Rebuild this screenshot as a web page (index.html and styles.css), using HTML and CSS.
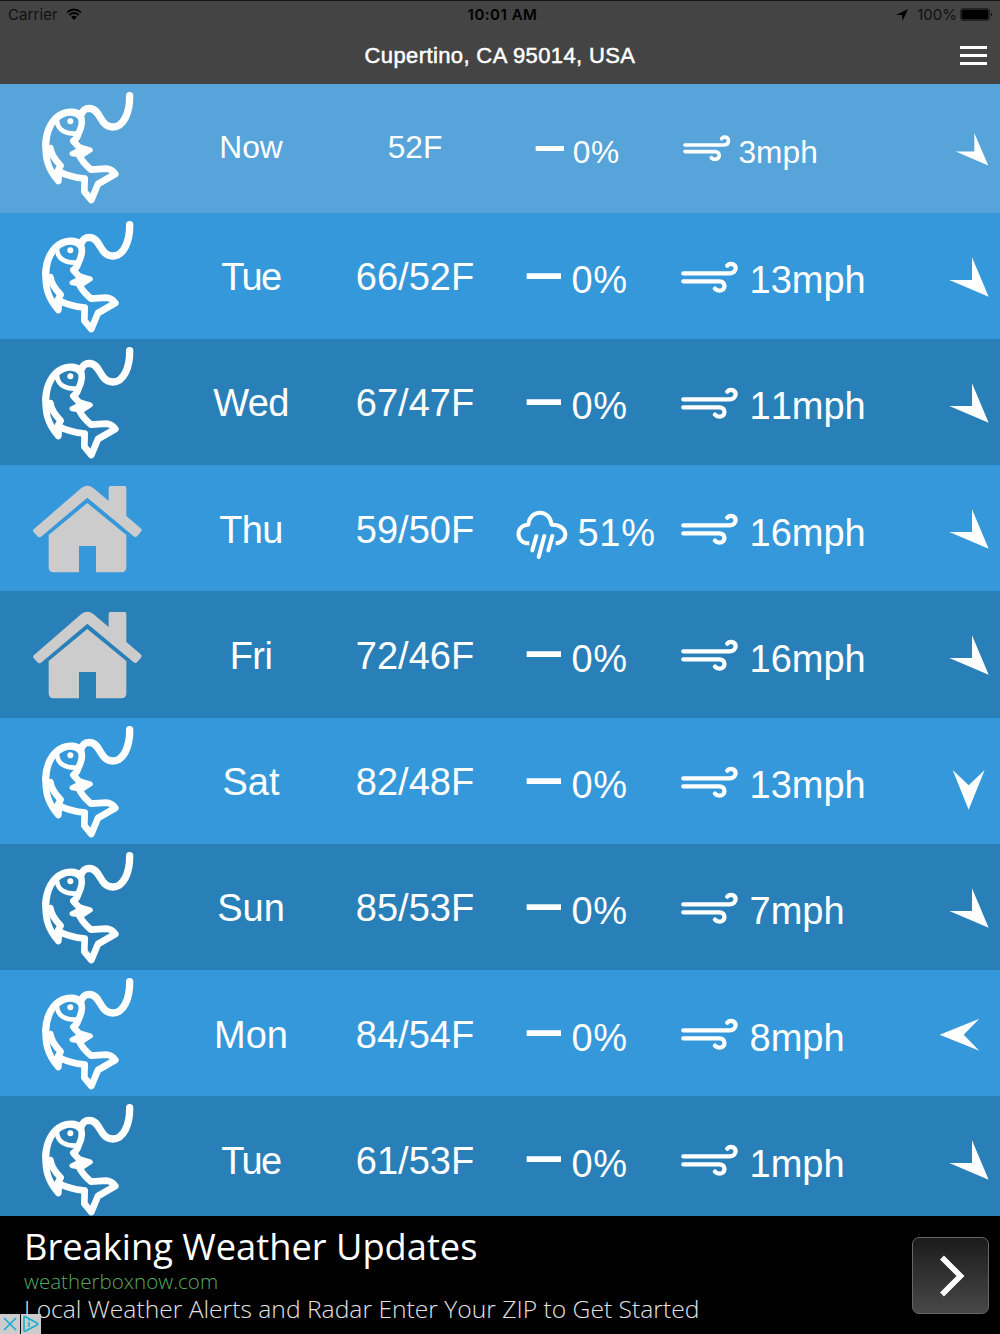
FILE: index.html
```
<!DOCTYPE html>
<html lang="en">
<head>
<meta charset="utf-8">
<title>Fishing Forecast</title>
<link rel="stylesheet" href="styles.css">
</head>
<body>
<svg class="defs" aria-hidden="true">
  <symbol id="fish" viewBox="0 0 420 378">
    <g fill="none" stroke="#fff" stroke-width="22" stroke-linecap="round" stroke-linejoin="round">
      <path d="M329 35C330 85 311 129 278 129C238 129 243 74 208 73C192 73 187 82 182 94"/>
      <path d="M181 97C170 82 146 82 129 89C97 103 79 138 77 182"/>
      <path d="M77 182C76 215 80 252 115 291L117 265" stroke-width="20"/>
      <path d="M91 192C94 214 106 229 122 245L111 265M117 262C139 275 164 280 194 284L193 323L214 348L234 300L286 270Q274 254 258 254L213 257Q189 237 179 217" stroke-width="20"/>
      <path d="M181 95C191 112 184 132 175 150Q172 163 160 171L175 188L194 197" stroke-width="20"/>
      <path d="M156 209L186 214L211 198L190 192Z" stroke-width="15"/>
      <path d="M186 190L211 198L184 212Z" stroke-width="8" fill="#fff"/>
      <path d="M111 110C113 138 136 152 177 148" stroke-width="14"/>
    </g>
    <circle cx="151" cy="112" r="9" fill="#fff"/>
  </symbol>
  <symbol id="house" viewBox="0 0 420 378">
    <path fill="#ccc" d="M43 191Q37 194 40 200L54 215Q59 219 65 214L202 98L341 214Q347 219 352 213L364 199Q367 194 362 190L319 153V68Q319 63 314 63H271Q266 63 266 68V108L220 69Q202 55 184 69ZM202 114L86 210V307Q86 322 101 322H177V243H228V322H304Q319 322 319 307V210Z"/>
  </symbol>
  <symbol id="dash" viewBox="0 0 207 378">
    <path fill="#fff" d="M71 181H174V198H71Z"/>
  </symbol>
  <symbol id="dash-now" viewBox="0 0 207 386">
    <path fill="#fff" d="M98 186H183V201H98Z"/>
  </symbol>
  <symbol id="rain" viewBox="0 0 225 378">
    <g fill="none" stroke="#fff" stroke-width="12" stroke-linecap="round">
      <path d="M79 235H73A28 28 0 0 1 76 179C80 132 140 130 146 179C198 178 199 232 158 235" stroke-linecap="butt" stroke-linejoin="round"/>
      <path d="M100 213L88 256M124 213L107 276M148 213L136 256"/>
    </g>
  </symbol>
  <symbol id="wind" viewBox="0 0 171 114">
    <g fill="none" stroke="#fff" stroke-width="13" stroke-linecap="round">
      <path d="M7 43H146C168 43 169 16 152 15Q144 14 139 20M7 67H115C136 67 135 95 115 95Q107 95 102 89"/>
    </g>
  </symbol>
  <symbol id="arrow-se" viewBox="0 0 240 378">
    <path fill="#fff" d="M156 133L206 251L88 201H156Z"/>
  </symbol>
  <symbol id="arrow-now" viewBox="0 0 240 386">
    <path fill="#fff" d="M163 147L205 245L107 203H163Z"/>
  </symbol>
  <symbol id="arrow-s" viewBox="0 0 240 378">
    <path fill="#fff" d="M98 156L146 202L194 156L146 275Z"/>
  </symbol>
  <symbol id="arrow-w" viewBox="0 0 240 378">
    <path fill="#fff" d="M59 194L178 146L131 194L178 242Z"/>
  </symbol>
</svg>

<header class="header">
  <div class="status">
    <div class="carrier">Carrier
      <svg width="16" height="12" viewBox="0 0 16 12"><path d="M1 4.4Q8-1.4 15 4.4M3.2 7Q8 3 12.8 7" fill="none" stroke="#000" stroke-width="1.8"/><path d="M5 8.9Q8 6.6 11 8.9L8 12Z"/></svg>
    </div>
    <div class="clock">10:01 AM</div>
    <div class="power">
      <svg class="locate" width="12" height="12" viewBox="0 0 12 12"><path d="M0 6L12 0L6.5 12L6 6Z"/></svg>
      <span>100%</span>
      <svg class="battery" width="33" height="13" viewBox="0 0 33 13"><rect x=".5" y=".5" width="29" height="12" rx="2.5" fill="none" stroke="#222"/><rect x="1.5" y="1.5" width="27" height="10" rx="1.5"/><path d="M31 4.5Q33 6.5 31 8.5Z"/></svg>
    </div>
  </div>
  <div class="titlebar">
    <h1 class="place">Cupertino, CA 95014, USA</h1>
    <div class="menu"><i></i><i></i><i></i></div>
  </div>
</header>

<main class="list">
  <section class="row now">
    <svg class="activity"><use href="#fish"/></svg>
    <div class="day">Now</div><div class="temp">52F</div>
    <div class="precip"><svg class="dash"><use href="#dash-now"/></svg><span>0%</span></div>
    <div class="wind"><svg class="gust"><use href="#wind"/></svg><span>3mph</span></div>
    <svg class="arrow"><use href="#arrow-now"/></svg>
  </section>
  <section class="row">
    <svg class="activity"><use href="#fish"/></svg>
    <div class="day tighter">Tue</div><div class="temp">66/52F</div>
    <div class="precip"><svg class="dash"><use href="#dash"/></svg><span>0%</span></div>
    <div class="wind"><svg class="gust"><use href="#wind"/></svg><span>13mph</span></div>
    <svg class="arrow"><use href="#arrow-se"/></svg>
  </section>
  <section class="row dark">
    <svg class="activity"><use href="#fish"/></svg>
    <div class="day tight">Wed</div><div class="temp">67/47F</div>
    <div class="precip"><svg class="dash"><use href="#dash"/></svg><span>0%</span></div>
    <div class="wind"><svg class="gust"><use href="#wind"/></svg><span>11mph</span></div>
    <svg class="arrow"><use href="#arrow-se"/></svg>
  </section>
  <section class="row">
    <svg class="activity"><use href="#house"/></svg>
    <div class="day tight">Thu</div><div class="temp">59/50F</div>
    <div class="precip"><svg class="rain"><use href="#rain"/></svg><span>51%</span></div>
    <div class="wind"><svg class="gust"><use href="#wind"/></svg><span>16mph</span></div>
    <svg class="arrow"><use href="#arrow-se"/></svg>
  </section>
  <section class="row dark">
    <svg class="activity"><use href="#house"/></svg>
    <div class="day tight">Fri</div><div class="temp">72/46F</div>
    <div class="precip"><svg class="dash"><use href="#dash"/></svg><span>0%</span></div>
    <div class="wind"><svg class="gust"><use href="#wind"/></svg><span>16mph</span></div>
    <svg class="arrow"><use href="#arrow-se"/></svg>
  </section>
  <section class="row">
    <svg class="activity"><use href="#fish"/></svg>
    <div class="day">Sat</div><div class="temp">82/48F</div>
    <div class="precip"><svg class="dash"><use href="#dash"/></svg><span>0%</span></div>
    <div class="wind"><svg class="gust"><use href="#wind"/></svg><span>13mph</span></div>
    <svg class="arrow"><use href="#arrow-s"/></svg>
  </section>
  <section class="row dark">
    <svg class="activity"><use href="#fish"/></svg>
    <div class="day">Sun</div><div class="temp">85/53F</div>
    <div class="precip"><svg class="dash"><use href="#dash"/></svg><span>0%</span></div>
    <div class="wind"><svg class="gust"><use href="#wind"/></svg><span>7mph</span></div>
    <svg class="arrow"><use href="#arrow-se"/></svg>
  </section>
  <section class="row">
    <svg class="activity"><use href="#fish"/></svg>
    <div class="day">Mon</div><div class="temp">84/54F</div>
    <div class="precip"><svg class="dash"><use href="#dash"/></svg><span>0%</span></div>
    <div class="wind"><svg class="gust"><use href="#wind"/></svg><span>8mph</span></div>
    <svg class="arrow"><use href="#arrow-w"/></svg>
  </section>
  <section class="row dark">
    <svg class="activity"><use href="#fish"/></svg>
    <div class="day tighter">Tue</div><div class="temp">61/53F</div>
    <div class="precip"><svg class="dash"><use href="#dash"/></svg><span>0%</span></div>
    <div class="wind"><svg class="gust"><use href="#wind"/></svg><span>1mph</span></div>
    <svg class="arrow"><use href="#arrow-se"/></svg>
  </section>
</main>

<aside class="ad">
  <div class="copy">
    <div class="headline">Breaking Weather Updates</div>
    <div class="site">weatherboxnow.com</div>
    <div class="blurb">Local Weather Alerts and Radar Enter Your ZIP to Get Started</div>
  </div>
  <div class="go"><svg width="26" height="42" viewBox="0 0 26 42"><path d="M3 2.5L21.5 21L3 39.5" fill="none" stroke="#fff" stroke-width="5.6"/></svg></div>
  <div class="badges">
    <svg width="20" height="20" viewBox="0 0 20 20"><path d="M4 4L16 16M16 4L4 16" stroke="#18aecf" stroke-width="1.6"/></svg>
    <svg width="20" height="20" viewBox="0 0 20 20"><path d="M3 3.2Q3 2 4.5 2.7L16 9Q17.5 10 16 11L4.5 17Q3 17.6 3 16.5ZM8 8V13M8 5.3V6.6" fill="none" stroke="#18aecf" stroke-width="1.6"/></svg>
  </div>
</aside>
</body>
</html>
```
FILE: styles.css
```
* { box-sizing: border-box; }
body {
  margin: 0;
  width: 1000px;
  height: 1334px;
  overflow: hidden;
  background: #000;
  color: #fff;
  font-family: "Liberation Sans", Arial, sans-serif;
}
svg { display: block; flex: none; }
.defs { width: 0; height: 0; position: absolute; }

.header { height: 84px; background: #444; border-top: 1px solid #161616; }
.status {
  display: grid;
  grid-template-columns: 1fr auto 1fr;
  height: 27px;
  padding: 0 7px 0 8px;
  line-height: 27px;
  color: #000;
  font-family: Inter, sans-serif;
  font-size: 15px;
}
.carrier { display: flex; align-items: center; gap: 8px; color: #111; letter-spacing: .1px; }
.carrier svg { margin-top: -2px; }
.clock { font-weight: 600; padding-left: 4px; letter-spacing: .5px; }
.power { display: flex; align-items: center; justify-content: flex-end; color: #111; }
.locate { margin-right: 9px; }
.battery { margin-left: 3px; }
.titlebar { display: grid; grid-template-columns: 1fr auto 1fr; height: 56px; align-items: center; }
.place { grid-column: 2; margin: 0; font-size: 22px; font-weight: 400; letter-spacing: .38px; -webkit-text-stroke: .5px #fff; }
.menu { justify-self: end; display: grid; gap: 5px; width: 27px; margin: 0 13px 2px 0; }
.menu i { height: 3px; background: #fff; }

.list { height: 1132px; overflow: hidden; }
.row {
  display: grid;
  grid-template-columns: 175px 152px 176px 178px 239px 80px;
  height: 126.25px;
  line-height: 126.25px;
  font-size: 38px;
  background: #3498db;
  white-space: nowrap;
  font-kerning: none;
}
.dark { background: #2980b9; }
.activity { width: 140px; height: 126px; margin-left: 20px; }
.day, .temp { text-align: center; padding-top: 1.5px; }
.day { font-kerning: normal; }
.tight { letter-spacing: -.6px; }
.tighter { letter-spacing: -1.6px; }
.precip, .wind { display: flex; }
.precip span, .wind span { padding-top: 4.5px; }
.precip span { letter-spacing: .7px; }
.dash { width: 69px; height: 126px; margin-right: -.5px; }
.rain { width: 75px; height: 126px; margin-right: -.5px; }
.gust { width: 57px; height: 38px; margin: 46px 11.5px 0 0; }
.arrow { width: 80px; height: 126px; }

.now { height: 128.5px; line-height: 128.5px; font-size: 31.7px; background: #56a4d9; }
.now .activity { height: 126px; }
.now .dash { height: 128.5px; margin-right: .7px; }
.now .gust { width: 47.5px; height: 31.7px; margin: 49px 8px 0 2px; }
.now .arrow { height: 128.5px; }
.now .day, .now .temp { padding-top: 0; line-height: 127px; }
.now .precip span, .now .wind span { padding-top: 3.5px; }

.ad {
  position: relative;
  display: flex;
  justify-content: space-between;
  height: 118px;
  padding: 0 11px 0 24px;
  font-family: "Open Sans", sans-serif;
  white-space: nowrap;
}
.headline { margin-top: 7px; font-size: 36.25px; line-height: 46px; }
.site { font-size: 20.6px; line-height: 24px; color: #58a962; font-weight: 300; }
.blurb { font-size: 24.65px; line-height: 32px; color: #e2e2e2; font-weight: 300; }
.go {
  display: grid;
  place-items: center;
  width: 77px;
  height: 77px;
  margin-top: 21px;
  padding-left: 2px;
  border: 1px solid #666;
  border-radius: 7px;
  background: linear-gradient(#1b1b1b, #484848);
}
.badges { position: absolute; left: 0; bottom: 0; display: flex; gap: 1px; }
.badges svg { background: #ccc; }
```
